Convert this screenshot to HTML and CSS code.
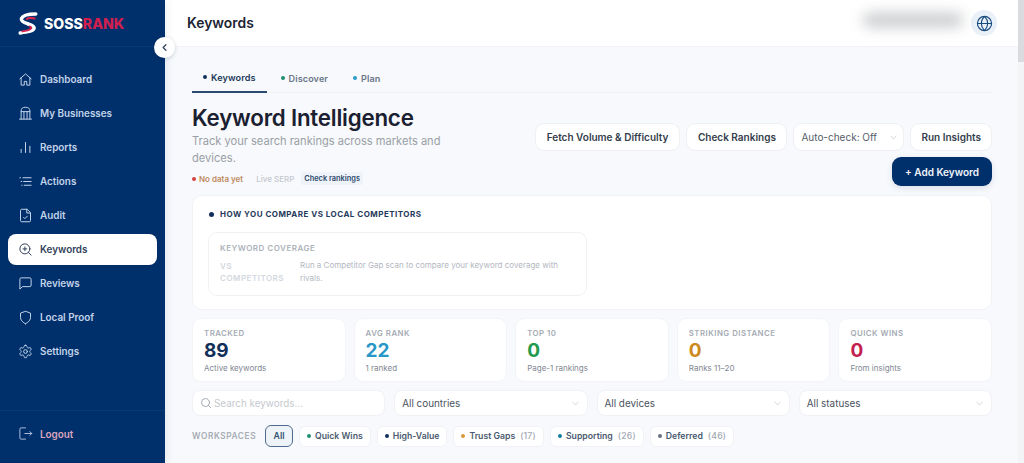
FILE: index.html
```html
<!DOCTYPE html>
<html lang="en">
<head>
<meta charset="utf-8">
<title>Keywords</title>
<link rel="stylesheet" href="styles.css">
</head>
<body>
<div class="app">
  <aside class="sidebar">
    <div class="brand">
      <svg class="brand-mark" viewBox="0 0 24 28" fill="none"><path d="M21.500 2.500C14 2.500 5.500 4 4 8c-1 3.500 3 5 8 6.500" stroke="#fff" stroke-width="4.200" stroke-linecap="round"/><path d="M20 8c-3.500-1-8-1-9.500.6" stroke="#d8234f" stroke-width="2.600" stroke-linecap="round"/><path d="M12 14.500c4 1.200 8 2.500 7.500 5.500-.8 3.500-9 4.500-17 5.500" stroke="#fff" stroke-width="4.200" stroke-linecap="round"/><path d="M14 17.500c2 .8 2.500 2 1 3.200-2 1.500-6 2.300-10 3" stroke="#d8234f" stroke-width="2.200" stroke-linecap="round"/></svg>
      <span class="brand-name">SOSS<span class="brand-accent">RANK</span></span>
    </div>
    <button class="collapse" aria-label="Collapse"><svg viewBox="0 0 24 24" class="collapse-icon"><path d="M15 6l-6 6 6 6"/></svg></button>
    <nav class="nav">
      <a class="nav-item"><svg class="icon" viewBox="0 0 24 24"><path d="M3 11l9-8 9 8"/><path d="M5 9.500V21h5v-6h4v6h5V9.500"/></svg>Dashboard</a>
      <a class="nav-item"><svg class="icon" viewBox="0 0 24 24"><path d="M5 21V8a7 6 0 0 1 14 0v13"/><path d="M2.500 21h19"/><path d="M9.500 9v12M14.500 9v12M5 9h14"/></svg>My Businesses</a>
      <a class="nav-item"><svg class="icon" viewBox="0 0 24 24"><path d="M5 15v5M12 4v16M19 10v10"/></svg>Reports</a>
      <a class="nav-item"><svg class="icon" viewBox="0 0 24 24"><path d="M8 6h13M9 12h12M10 18h11M3 6h1M5 12h1M6 18h.5"/></svg>Actions</a>
      <a class="nav-item"><svg class="icon" viewBox="0 0 24 24"><path d="M14 2H6a2 2 0 0 0-2 2v16a2 2 0 0 0 2 2h12a2 2 0 0 0 2-2V8z"/><path d="M14 2v6h6"/><path d="M9 15l2 2 4-4"/></svg>Audit</a>
      <a class="nav-item is-active"><svg class="icon" viewBox="0 0 24 24"><circle cx="11" cy="11" r="8"/><path d="M21 21l-4.300-4.300M11 8v6M8 11h6"/></svg>Keywords</a>
      <a class="nav-item"><svg class="icon" viewBox="0 0 24 24"><path d="M21 15a2 2 0 0 1-2 2H7l-4 4V5a2 2 0 0 1 2-2h14a2 2 0 0 1 2 2z"/></svg>Reviews</a>
      <a class="nav-item"><svg class="icon" viewBox="0 0 24 24"><path d="M12 22s8-3.500 8-10V5l-8-3-8 3v7c0 6.500 8 10 8 10z"/></svg>Local Proof</a>
      <a class="nav-item"><svg class="icon" viewBox="0 0 24 24"><path d="M12.220 2h-.44a2 2 0 0 0-2 2v.18a2 2 0 0 1-1 1.730l-.43.25a2 2 0 0 1-2 0l-.15-.08a2 2 0 0 0-2.730.73l-.22.38a2 2 0 0 0 .73 2.730l.15.1a2 2 0 0 1 1 1.720v.51a2 2 0 0 1-1 1.740l-.15.09a2 2 0 0 0-.73 2.730l.22.38a2 2 0 0 0 2.730.73l.15-.08a2 2 0 0 1 2 0l.43.25a2 2 0 0 1 1 1.730V20a2 2 0 0 0 2 2h.44a2 2 0 0 0 2-2v-.18a2 2 0 0 1 1-1.730l.43-.25a2 2 0 0 1 2 0l.15.08a2 2 0 0 0 2.730-.73l.22-.39a2 2 0 0 0-.73-2.730l-.15-.08a2 2 0 0 1-1-1.740v-.5a2 2 0 0 1 1-1.740l.15-.09a2 2 0 0 0 .73-2.730l-.22-.38a2 2 0 0 0-2.730-.73l-.15.08a2 2 0 0 1-2 0l-.43-.25a2 2 0 0 1-1-1.730V4a2 2 0 0 0-2-2z"/><circle cx="12" cy="12" r="3"/></svg>Settings</a>
    </nav>
    <div class="logout">
      <a class="nav-item logout-item"><svg class="icon icon-logout" viewBox="0 0 24 24"><path d="M12 3H5a2 2 0 0 0-2 2v14a2 2 0 0 0 2 2h7"/><path d="M11 12h11M19 9l3 3-3 3"/></svg>Logout</a>
    </div>
  </aside>

  <div class="page">
    <header class="topbar">
      <h1 class="topbar-title">Keywords</h1>
      <div class="topbar-right">
        <div class="blurred-name"></div>
        <button class="globe" aria-label="Language"><svg viewBox="0 0 24 24" class="globe-icon"><circle cx="12" cy="12" r="10"/><path d="M2 12h20M12 2c-6 6-6 14 0 20M12 2c6 6 6 14 0 20"/></svg></button>
      </div>
    </header>

    <main class="main">
      <div class="tabs">
        <a class="tab is-current"><i class="dot dot-navy"></i>Keywords</a>
        <a class="tab"><i class="dot dot-green"></i>Discover</a>
        <a class="tab"><i class="dot dot-blue"></i>Plan</a>
      </div>

      <section class="hero">
        <div class="hero-text">
          <h2 class="hero-title">Keyword Intelligence</h2>
          <p class="hero-sub">Track your search rankings across markets and devices.</p>
          <div class="status">
            <span class="status-item status-none"><i class="dot dot-red"></i>No data yet</span>
            <span class="status-item status-live">Live SERP</span>
            <span class="status-chip">Check rankings</span>
          </div>
        </div>
        <div class="actions">
          <button class="btn btn-fetch">Fetch Volume &amp; Difficulty</button>
          <button class="btn btn-check">Check Rankings</button>
          <div class="btn btn-select">Auto-check: Off<svg class="chev" viewBox="0 0 24 24"><path d="M5 8l7 8 7-8"/></svg></div>
          <button class="btn btn-run">Run Insights</button>
          <button class="btn-primary">+ Add Keyword</button>
        </div>
      </section>

      <section class="compare">
        <h3 class="compare-title"><i class="dot dot-navy dot-lg"></i>HOW YOU COMPARE VS LOCAL COMPETITORS</h3>
        <div class="coverage">
          <div class="coverage-label">KEYWORD COVERAGE</div>
          <div class="coverage-row">
            <div class="coverage-vs">VS COMPETITORS</div>
            <p class="coverage-desc">Run a Competitor Gap scan to compare your keyword coverage with rivals.</p>
          </div>
        </div>
      </section>

      <section class="stats">
        <div class="stat"><div class="stat-label">TRACKED</div><div class="stat-value c-navy">89</div><div class="stat-sub">Active keywords</div></div>
        <div class="stat"><div class="stat-label">AVG RANK</div><div class="stat-value c-blue">22</div><div class="stat-sub">1 ranked</div></div>
        <div class="stat"><div class="stat-label">TOP 10</div><div class="stat-value c-green">0</div><div class="stat-sub">Page-1 rankings</div></div>
        <div class="stat"><div class="stat-label">STRIKING DISTANCE</div><div class="stat-value c-amber">0</div><div class="stat-sub">Ranks 11–20</div></div>
        <div class="stat"><div class="stat-label">QUICK WINS</div><div class="stat-value c-red">0</div><div class="stat-sub">From insights</div></div>
      </section>

      <section class="filters">
        <div class="field field-search"><svg class="search-icon" viewBox="0 0 24 24"><circle cx="11" cy="11" r="8"/><path d="M21 21l-4.300-4.300"/></svg>Search keywords...</div>
        <div class="field">All countries<svg class="chev" viewBox="0 0 24 24"><path d="M5 8l7 8 7-8"/></svg></div>
        <div class="field">All devices<svg class="chev" viewBox="0 0 24 24"><path d="M5 8l7 8 7-8"/></svg></div>
        <div class="field">All statuses<svg class="chev" viewBox="0 0 24 24"><path d="M5 8l7 8 7-8"/></svg></div>
      </section>

      <section class="workspaces">
        <span class="ws-label">WORKSPACES</span>
        <button class="ws-chip ws-all">All</button>
        <button class="ws-chip"><i class="dot dot-green"></i>Quick Wins</button>
        <button class="ws-chip"><i class="dot dot-navy"></i>High-Value</button>
        <button class="ws-chip"><i class="dot dot-amber"></i>Trust Gaps<span class="ws-count">(17)</span></button>
        <button class="ws-chip"><i class="dot dot-teal"></i>Supporting<span class="ws-count">(26)</span></button>
        <button class="ws-chip"><i class="dot dot-grey"></i>Deferred<span class="ws-count">(46)</span></button>
      </section>
    </main>
  </div>

  <div class="scrollbar"><div class="scrollbar-thumb"></div></div>
</div>
</body>
</html>
```
FILE: styles.css
```css
* { box-sizing: border-box; }
html, body { margin: 0; height: 100%; overflow: hidden; }
body { font-family: Inter, "Liberation Sans", sans-serif; color: #1a2233; background: #f7f9fc; }
h1, h2, h3, p { margin: 0; }
button { font-family: inherit; cursor: pointer; }
i { font-style: normal; }

.app { display: flex; height: 463px; width: 1024px; overflow: hidden; }

.sidebar { position: relative; width: 165px; flex: none; display: flex; flex-direction: column; background: #00306b; box-shadow: 2px 0 8px rgba(0,48,107,.08); z-index: 2; }
.brand { height: 47px; display: flex; align-items: center; gap: 6px; padding-left: 18px; border-bottom: 1px solid #0a3a74; }
.brand-mark { width: 20px; height: 23px; flex: none; }
.brand-name { font-size: 14.100px; font-weight: 800; color: #fff; }
.brand-accent { color: #d01f4e; }
.collapse { position: absolute; left: 154px; top: 37px; width: 21px; height: 21px; padding: 0; border: 0; border-radius: 50%; background: #fff; display: flex; align-items: center; justify-content: center; box-shadow: 0 1px 4px rgba(0,30,70,.18); }
.collapse-icon { width: 11px; height: 11px; fill: none; stroke: #3a4a60; stroke-width: 3; stroke-linecap: round; stroke-linejoin: round; }

.nav { flex: 1; display: flex; flex-direction: column; gap: 3px; padding: 16.500px 8px 0; }
.nav-item { height: 31px; display: flex; align-items: center; gap: 7px; padding-left: 10px; border-radius: 8px; font-size: 9.900px; font-weight: 600; color: #c3d3ea; }
.icon { width: 15px; height: 15px; flex: none; fill: none; stroke: #c3d3ea; stroke-width: 1.600; stroke-linecap: round; stroke-linejoin: round; }
.nav-item.is-active { background: #fff; color: #33435c; box-shadow: 0 1px 3px rgba(0,20,60,.15); }
.is-active .icon { stroke: #33435c; }
.logout { height: 53px; border-top: 1px solid #0a3a74; padding: 7px 8px 0; }
.logout-item { color: #dba6bd; }
.icon-logout { stroke: #b9c4e0; stroke-width: 1.500; }

.page { flex: 1; min-width: 0; display: flex; flex-direction: column; }
.topbar { height: 47px; flex: none; background: #fff; display: flex; align-items: center; justify-content: space-between; padding: 0 21px 0 22px; border-bottom: 1px solid #f1f3f7; }
.topbar-title { font-size: 13.900px; font-weight: 600; color: #1c2433; }
.topbar-right { display: flex; align-items: center; }
.blurred-name { width: 100px; height: 14px; margin: 0 8px 6px 0; background: #c8cacd; border-radius: 7px; filter: blur(7px); }
.globe { width: 26px; height: 26px; padding: 0; border: 0; border-radius: 50%; background: #e9f0f8; display: flex; align-items: center; justify-content: center; }
.globe-icon { width: 17px; height: 17px; fill: none; stroke: #174a7e; stroke-width: 1.600; }

.main { flex: 1; padding: 17px 26px 0 27px; }

.tabs { display: flex; gap: 3px; height: 29px; border-bottom: 1px solid #f0f2f6; }
.tab { height: 29px; display: flex; align-items: center; gap: 4px; padding: 0 11px 1px; font-size: 9.100px; font-weight: 600; color: #6a7688; letter-spacing: .1px; }
.tab.is-current { color: #23395a; border-bottom: 2px solid #2b4a72; }
.dot { display: inline-block; width: 4px; height: 4px; border-radius: 50%; flex: none; }
.dot-navy { background: #12305a; }
.dot-green { background: #1f8f70; }
.dot-blue { background: #2b9ac9; }
.dot-teal { background: #12809c; }
.dot-red { background: #d2423f; }
.dot-amber { background: #d99a3a; }
.dot-grey { background: #6a7280; }
.dot-lg { width: 5px; height: 5px; }

.hero { display: flex; justify-content: space-between; align-items: flex-end; height: 93px; }
.hero-text { width: 260px; flex: none; align-self: flex-start; padding-top: 11px; }
.hero-title { font-size: 22.300px; line-height: 27px; font-weight: 600; color: #1a2030; letter-spacing: -.2px; white-space: nowrap; }
.hero-sub { margin-top: 2px; font-size: 11.100px; line-height: 17px; color: #9a9fa6; }
.status { display: flex; align-items: center; margin-top: 5px; font-size: 8px; font-weight: 500; }
.status-item { display: inline-flex; align-items: center; gap: 3px; }
.status-none { color: #c08a5e; font-weight: 600; }
.status-live { color: #c4c8cf; margin-left: 13px; }
.status-chip { margin-left: 7px; padding: 2px 3px; border-radius: 3px; background: #eef3fa; color: #2f4a6c; font-size: 7.400px; font-weight: 600; }

.actions { width: 470px; display: flex; flex-wrap: wrap; justify-content: flex-end; gap: 6px; }
.btn { height: 28px; padding: 0 11px; display: flex; align-items: center; background: #fff; border: 1px solid #eef0f4; border-radius: 9px; font-size: 10px; font-weight: 600; color: #343d4b; white-space: nowrap; }
.btn-check { padding: 0 10.500px; }
.btn-run { padding: 0 10px; }
.btn-select { font-weight: 400; color: #555d69; padding: 0 5px 0 7px; justify-content: space-between; width: 111px; }
.btn-primary { width: 100px; height: 29px; padding: 0; border: 0; border-radius: 9px; background: #00306b; color: #f1f5fb; font-size: 10px; font-weight: 600; box-shadow: 0 2px 6px rgba(0,48,107,.12); }
.chev { width: 9px; height: 9px; flex: none; fill: none; stroke: #c8ccd3; stroke-width: 2; stroke-linecap: round; stroke-linejoin: round; }

.compare { margin-top: 9px; height: 115px; background: #fff; border: 1px solid #f0f2f6; border-radius: 10px; padding: 12px 15px 0; }
.compare-title { display: flex; align-items: center; gap: 6px; padding-left: 1px; font-size: 8px; line-height: 12px; font-weight: 700; color: #1f3a5c; letter-spacing: .48px; }
.coverage { width: 379px; height: 64px; margin-top: 12px; border: 1px solid #f0f2f6; border-radius: 9px; padding: 10px 11px 0; }
.coverage-label { font-size: 8px; line-height: 11px; font-weight: 600; letter-spacing: .5px; color: #adb2bb; }
.coverage-row { display: flex; margin-top: 5px; }
.coverage-vs { width: 80px; flex: none; padding: 1px 15px 0 0; font-size: 8px; line-height: 12px; font-weight: 600; letter-spacing: .5px; color: #d3d8e0; }
.coverage-desc { font-size: 8px; line-height: 13px; color: #b3b7bf; }

.stats { display: grid; grid-template-columns: repeat(5, 1fr); gap: 8px; margin-top: 8px; }
.stat { height: 64px; background: #fff; border: 1px solid #f2f4f7; border-radius: 9px; padding: 9px 11px 0; }
.stat-label { font-size: 7.800px; line-height: 11px; font-weight: 600; letter-spacing: .5px; color: #a5abb4; }
.stat-value { margin-top: 1px; font-size: 19px; line-height: 21px; font-weight: 700; }
.stat-sub { margin-top: 1px; font-size: 8px; line-height: 12px; color: #7f8792; }
.c-navy { color: #12305a; }
.c-blue { color: #2797c8; }
.c-green { color: #239a4d; }
.c-amber { color: #cf8a1f; }
.c-red { color: #c41f4f; }

.filters { display: grid; grid-template-columns: repeat(4, 1fr); gap: 9px; margin-top: 8px; }
.field { height: 26px; display: flex; align-items: center; justify-content: space-between; padding: 0 7px; background: #fff; border: 1px solid #f0f2f6; border-radius: 8px; font-size: 9.900px; color: #4a525e; }
.field-search { justify-content: flex-start; gap: 2px; color: #c5c9cf; }
.search-icon { width: 12px; height: 12px; fill: none; stroke: #9aa1aa; stroke-width: 1.800; stroke-linecap: round; }

.workspaces { display: flex; align-items: center; gap: 6px; margin-top: 9px; }
.ws-label { width: 67px; font-size: 8.300px; font-weight: 600; letter-spacing: .6px; color: #a7acb5; }
.ws-chip { height: 21px; padding: 0 7px; display: flex; align-items: center; gap: 4px; background: #fff; border: 1px solid #f0f2f6; border-radius: 6px; font-size: 8.700px; font-weight: 600; color: #4a5a70; white-space: nowrap; }
.ws-all { height: 22px; width: 28px; justify-content: center; padding: 0; background: #eef3f9; border-color: #4f6c8f; color: #36506f; }
.ws-count { margin-left: 1px; font-weight: 500; color: #a3a9b3; letter-spacing: .2px; }

.scrollbar { width: 6px; flex: none; background: #f3f4f6; }
.scrollbar-thumb { height: 62px; background: #d9dbdf; }
```
